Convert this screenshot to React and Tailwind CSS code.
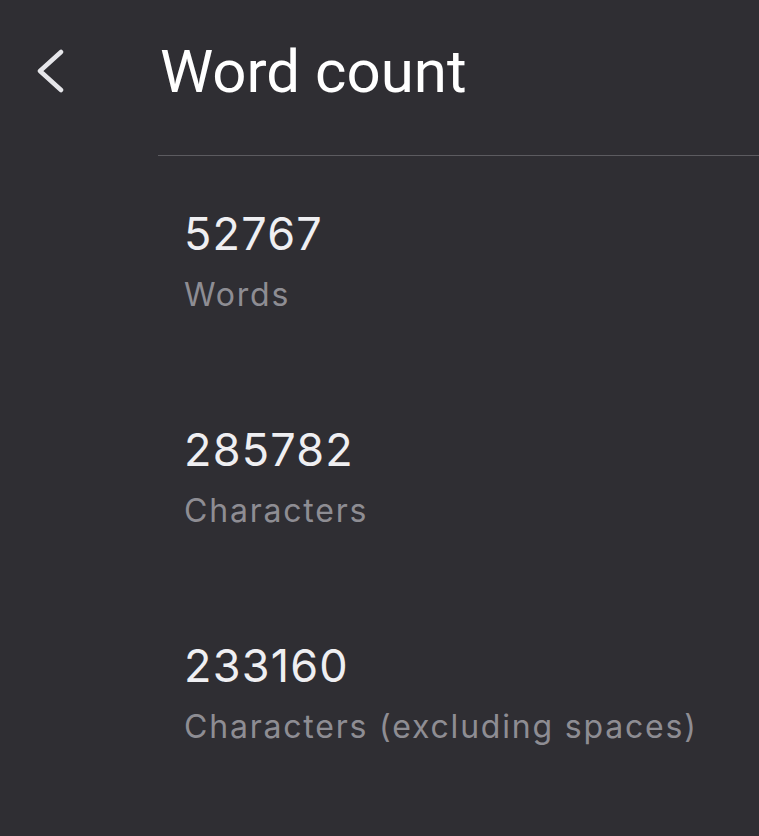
import React from 'react'

const STATS = [
  { value: '52767', label: 'Words' },
  { value: '285782', label: 'Characters' },
  { value: '233160', label: 'Characters (excluding spaces)' },
]

function Stat({ value, label }) {
  return (
    <div className="h-[216px] pt-[50px] font-['Inter','Roboto',sans-serif]">
      <div className="text-[45px] leading-[56px] text-[#efeff2] tracking-[1.2px]">{value}</div>
      <div className="text-[32px] leading-[40px] text-[#8e8d93] mt-[13px] tracking-[1.8px]">{label}</div>
    </div>
  )
}

export default function App() {
  return (
    <div className="w-[759px] h-[836px] bg-[#2f2e33] font-['Roboto','Liberation_Sans',sans-serif] overflow-hidden">
      {/* Header */}
      <div className="flex items-center h-[155px]">
        <button className="w-[160px] h-full flex items-center pl-[34px] -mt-[14px]">
          <svg width="32" height="44" viewBox="0 0 32 44" fill="none">
            <path d="M27 3 L6 22 L27 41" stroke="#e6e6ea" strokeWidth="4.5" strokeLinecap="round" strokeLinejoin="round" />
          </svg>
        </button>
        <h1 className="text-[60px] leading-none text-white -mt-[12px]">Word count</h1>
      </div>

      {/* Divider */}
      <div className="ml-[158px] h-px bg-[#5c5b60]" />

      {/* Stats */}
      <div className="pl-[184px]">
        {STATS.map(s => (
          <Stat key={s.label} {...s} />
        ))}
      </div>
    </div>
  )
}
